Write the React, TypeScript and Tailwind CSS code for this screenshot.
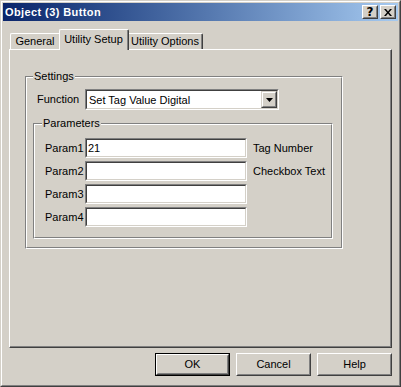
import React from "react";

function Raised({ className = "", children }: { className?: string; children?: React.ReactNode }) {
  return (
    <div className={`border border-t-white border-l-white border-r-[#404040] border-b-[#404040] bg-[#d4d0c8] ${className}`}>
      <div className="w-full h-full border border-t-[#d4d0c8] border-l-[#d4d0c8] border-r-[#808080] border-b-[#808080] flex items-center justify-center">
        {children}
      </div>
    </div>
  );
}

function Sunken({ className = "", children }: { className?: string; children?: React.ReactNode }) {
  return (
    <div className={`border border-t-[#808080] border-l-[#808080] border-r-white border-b-white ${className}`}>
      <div className="w-full h-full border border-t-[#404040] border-l-[#404040] border-r-[#d4d0c8] border-b-[#d4d0c8] bg-white flex items-center">
        {children}
      </div>
    </div>
  );
}

function Group({
  className = "",
  label,
  labelPos,
  children,
}: {
  className?: string;
  label: string;
  labelPos: string;
  children?: React.ReactNode;
}) {
  return (
    <div className={`relative border border-t-[#808080] border-l-[#808080] border-r-white border-b-white ${className}`}>
      <div className="w-full h-full border border-t-white border-l-white border-r-[#808080] border-b-[#808080]">
        {children}
      </div>
      <div className={`absolute -top-[8px] ${labelPos} px-[1px] bg-[#d4d0c8] leading-[14px]`}>{label}</div>
    </div>
  );
}

function ParamRow({ label, value, desc }: { label: string; value?: string; desc?: string }) {
  return (
    <div className="flex items-center h-[20px]">
      <div className="w-[40px]">{label}</div>
      <Sunken className="w-[162px] h-[20px]">
        <span className="pl-[1px] leading-[14px]">{value}</span>
      </Sunken>
      <div className="ml-[6px]">{desc}</div>
    </div>
  );
}

export default function App() {
  return (
    <div className="w-[401px] h-[387px] bg-[#d4d0c8] border border-t-[#d4d0c8] border-l-[#d4d0c8] border-r-[#404040] border-b-[#404040] font-['Liberation_Sans',Arial,sans-serif] text-[11px] text-black select-none">
      <div className="h-full border border-t-white border-l-white border-r-[#808080] border-b-[#808080] p-[1px] flex flex-col">
        {/* Title bar */}
        <div className="h-[18px] flex items-center justify-between bg-linear-to-r from-[#0a246a] to-[#a6caf0]">
          <div className="pl-[2px] text-white font-bold tracking-[0.4px] leading-[14px]">Object (3) Button</div>
          <div className="flex gap-[2px] pr-[2px]">
            <Raised className="w-[16px] h-[14px]">
              <span className="font-bold text-[12px] leading-[10px] font-['DejaVu_Sans',sans-serif]">?</span>
            </Raised>
            <Raised className="w-[16px] h-[14px]">
              <svg width="8" height="7" viewBox="0 0 8 7">
                <path d="M0 0h2l2 2.4 2-2.4h2L5 3.5 8 7H6L4 4.6 2 7H0l3-3.5z" fill="black" />
              </svg>
            </Raised>
          </div>
        </div>

        {/* Body */}
        <div className="flex flex-col px-[6px] pt-[8px]">
          {/* Tabs */}
          <div className="flex items-end h-[20px] pl-[1px]">
            <div className="w-[49px] h-[16px] border-t border-l border-t-white border-l-white rounded-tl-[2px] flex items-center justify-center">
              General
            </div>
            <div className="relative z-10 -mb-[1px] w-[70px] h-[21px] bg-[#d4d0c8] border-t border-l border-r border-t-white border-l-white border-r-[#404040] rounded-t-[2px]">
              <div className="h-full border-r border-r-[#808080] flex items-center justify-center pb-[1px]">Utility Setup</div>
            </div>
            <div className="w-[74px] h-[16px] border-t border-r border-t-white border-r-[#404040] rounded-tr-[2px]">
              <div className="h-full border-r border-r-[#808080] flex items-center justify-center">Utility Options</div>
            </div>
          </div>

          {/* Panel */}
          <div className="w-[383px] h-[299px] border border-t-white border-l-white border-r-[#404040] border-b-[#404040]">
            <div className="w-full h-full border-r border-b border-r-[#808080] border-b-[#808080] pl-[15px] pt-[26px]">
              <Group className="w-[318px] h-[173px]" label="Settings" labelPos="left-[7px]">
                <div className="pt-[11px] pl-[6px]">
                  <div className="flex items-center h-[21px] pl-[4px]">
                    <div className="w-[48px]">Function</div>
                    <div className="w-[194px] h-[21px] border border-t-[#808080] border-l-[#808080] border-r-white border-b-white">
                      <div className="w-full h-full border border-t-[#404040] border-l-[#404040] border-r-[#d4d0c8] border-b-[#d4d0c8] bg-white flex items-center">
                        <span className="flex-1 pl-[2px] leading-[14px]">Set Tag Value Digital</span>
                        <div className="w-[16px] h-[17px] border border-t-[#d4d0c8] border-l-[#d4d0c8] border-r-[#404040] border-b-[#404040] bg-[#d4d0c8]">
                          <div className="w-full h-full border border-t-white border-l-white border-r-[#808080] border-b-[#808080] flex items-center justify-center">
                            <svg width="7" height="4" viewBox="0 0 7 4">
                              <path d="M0 0h7L3.5 4z" fill="black" />
                            </svg>
                          </div>
                        </div>
                      </div>
                    </div>
                  </div>

                  <Group className="w-[300px] h-[116px] mt-[13px]" label="Parameters" labelPos="left-[8px]">
                    <div className="pt-[13px] pl-[10px] flex flex-col gap-[3px]">
                      <ParamRow label="Param1" value="21" desc="Tag Number" />
                      <ParamRow label="Param2" desc="Checkbox Text" />
                      <ParamRow label="Param3" />
                      <ParamRow label="Param4" />
                    </div>
                  </Group>
                </div>
              </Group>
            </div>
          </div>

          {/* Buttons */}
          <div className="flex justify-end gap-[6px] mt-[5px] w-[383px]">
            <div className="w-[75px] h-[23px] border border-black">
              <Raised className="w-full h-full">OK</Raised>
            </div>
            <Raised className="w-[75px] h-[23px]">Cancel</Raised>
            <Raised className="w-[75px] h-[23px]">Help</Raised>
          </div>
        </div>
      </div>
    </div>
  );
}
